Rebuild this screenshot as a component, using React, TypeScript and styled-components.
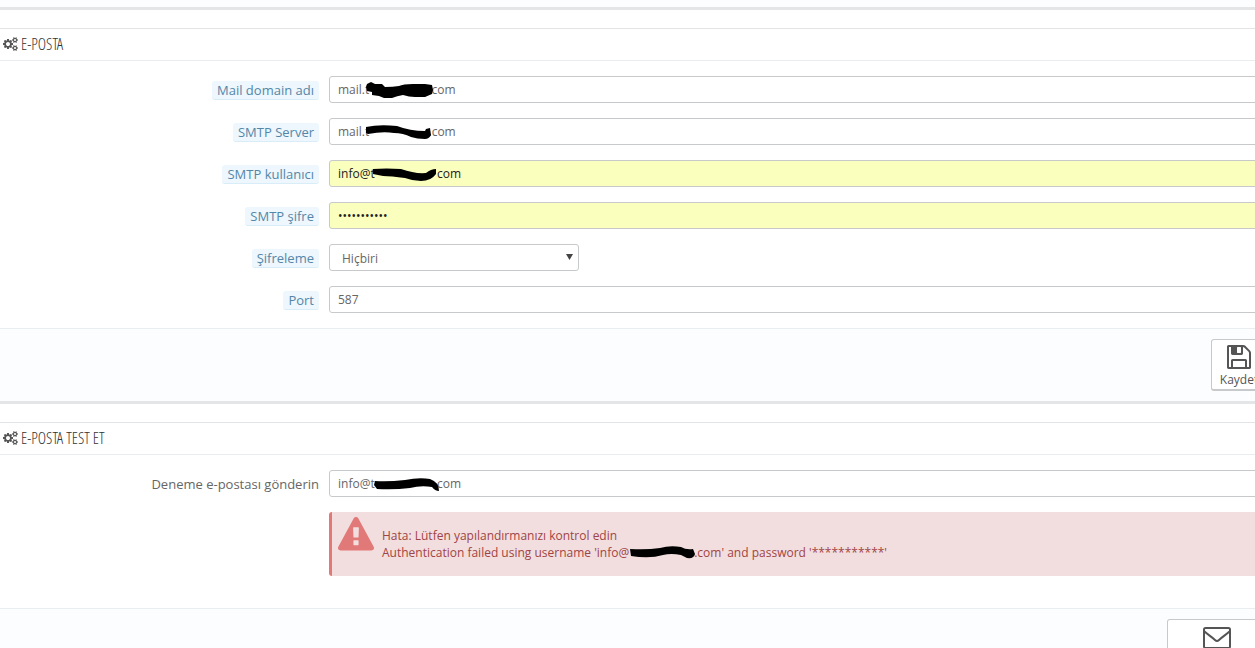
import React from 'react';
import styled, { createGlobalStyle } from 'styled-components';

const GlobalStyle = createGlobalStyle`
  *, *::before, *::after { box-sizing: border-box; }
  body {
    margin: 0;
    background: #fff;
    color: #666;
    font: 12px/17px "Open Sans", "Noto Sans", sans-serif;
  }
`;

const Viewport = styled.div`
  height: 100vh;
  overflow: hidden;
`;

/* The panels run a little past the right edge of the window. */
const Page = styled.main`
  width: calc(100% + 22px);
`;

const Panel = styled.section`
  margin-bottom: 18px;
  border-top: 1px solid #e3e4e6;
  border-bottom: 3px solid #e4e5e7;
  background: #fff;
`;

const PanelTail = styled.div`
  height: 10px;
  margin-bottom: 18px;
  border-bottom: 3px solid #e4e5e7;
  background: #fcfdfe;
`;

const PanelHeading = styled.h3`
  display: flex;
  align-items: center;
  gap: 3px;
  height: 32px;
  margin: 0;
  padding: 0 0 2px 3px;
  border-bottom: 1px solid #eaedef;
  color: #333;
  font: 400 16px/20px "Open Sans Condensed Light", "Roboto Condensed", "Liberation Sans Narrow", sans-serif;
  text-transform: uppercase;

  svg {
    color: #555;
  }
`;

const PanelBody = styled.div<{ $roomy?: boolean }>`
  display: flex;
  flex-direction: column;
  gap: 15px;
  padding: 15px 0 ${(p) => (p.$roomy ? 32 : 15)}px;
`;

const PanelFooter = styled.footer`
  display: flex;
  justify-content: flex-end;
  padding: 10px;
  border-top: 1px solid #eaedef;
  background: #fcfdfe;
`;

const Row = styled.div`
  display: grid;
  grid-template-columns: 319px minmax(0, 1fr);
  column-gap: 10px;
  align-items: center;
  padding-right: 10px;
`;

const Label = styled.label<{ $plain?: boolean }>`
  justify-self: end;
  margin-top: 2px;
  padding: ${(p) => (p.$plain ? '0' : '0 5px')};
  border-bottom: 1px solid ${(p) => (p.$plain ? 'transparent' : '#d8edf7')};
  border-radius: 3px;
  background: ${(p) => (p.$plain ? 'none' : '#edf7fd')};
  color: ${(p) => (p.$plain ? '#666' : '#5486a8')};
  font-size: 13px;
  line-height: 18px;
`;

const Control = styled.div<{ $narrow?: boolean }>`
  position: relative;
  width: ${(p) => (p.$narrow ? '250px' : 'auto')};
`;

const Input = styled.input<{ $filled?: boolean }>`
  display: block;
  width: 100%;
  height: 27px;
  padding: 0 8px;
  border: 1px solid #c7c9cb;
  border-radius: 3px;
  outline: 0;
  background: ${(p) => (p.$filled ? '#faffbd' : '#fff')};
  color: ${(p) => (p.$filled ? '#222' : '#666')};
  font: inherit;
`;

const Select = styled.select`
  display: block;
  width: 100%;
  height: 27px;
  padding: 1px 12px 0;
  border: 1px solid #c7c9cb;
  border-radius: 3px;
  appearance: none;
  background: #fff;
  color: #666;
  font: inherit;
`;

const Caret = styled.svg`
  position: absolute;
  top: 10px;
  right: 6px;
  pointer-events: none;
`;

const Stroke = styled.svg<{ $left: number; $top: number }>`
  position: absolute;
  top: ${(p) => p.$top}px;
  left: ${(p) => p.$left}px;
  pointer-events: none;
`;

const Alert = styled.div`
  display: flex;
  grid-column: 2;
  gap: 8px;
  height: 64px;
  padding: 5px 6px;
  border-left: 3px solid #e27979;
  border-radius: 3px;
  background: #f2dedf;
  color: #a04444;
`;

const AlertText = styled.p`
  margin: 10px 0 0;
  white-space: pre;
`;

const Hidden = styled.span`
  display: inline-block;
  position: relative;
  width: 65px;
`;

const Button = styled.button<{ $wide?: boolean }>`
  display: flex;
  flex-direction: column;
  align-items: center;
  gap: 2px;
  width: ${(p) => (p.$wide ? 100 : 56)}px;
  height: 52px;
  padding: 5px 0 0;
  border: 1px solid #c7c9cb;
  border-bottom-width: 2px;
  border-radius: 3px;
  background: #fff;
  color: #555;
  font: inherit;

  svg {
    flex-shrink: 0;
  }
`;

const smallCog =
  'q0 16-149 31-12 27-30 52 51 113 51 138 0 4-4 7-122 71-124 71-8 0-46-47t-52-68q-20 2-30 2t-30-2q-14 21-52 68t-46 47q-2 0-124-71-4-3-4-7 0-25 51-138-18-25-30-52-149-15-149-31v-140q0-16 149-31 13-29 30-52-51-113-51-138 0-4 4-7 4-2 35-20t59-34 30-16q8 0 46 46.5t52 67.5q20-2 30-2t30 2q51-71 92-112l6-2q4 0 124 70 4 3 4 7 0 25-51 138 17 23 30 52 149 15 149 31z';

const CogsIcon = () => (
  <svg width="15" height="14" viewBox="0 128 1920 1792" fill="currentColor" aria-hidden="true">
    <path
      d={
        'M896 1024q0-106-75-181t-181-75-181 75-75 181 75 181 181 75 181-75 75-181zm768 512q0-52-38-90t-90-38-90 38-38 90q0 53 37.5 90.5t90.5 37.5 90.5-37.5 37.5-90.5zm0-1024q0-52-38-90t-90-38-90 38-38 90q0 53 37.5 90.5t90.5 37.5 90.5-37.5 37.5-90.5zm-384 421v185q0 10-7 19.5t-16 10.5l-155 24q-11 35-32 76 34 48 90 115 7 11 7 20 0 12-7 19-23 30-82.5 89.5t-78.5 59.5q-11 0-21-7l-115-90q-37 19-77 31-11 108-23 155-7 24-30 24h-186q-11 0-20-7.5t-10-17.5l-23-153q-34-10-75-31l-118 89q-7 7-20 7-11 0-21-8-144-133-144-160 0-9 7-19 10-14 41-53t47-61q-23-44-35-82l-152-24q-10-1-17-9.5t-7-19.5v-185q0-10 7-19.5t16-10.5l155-24q11-35 32-76-34-48-90-115-7-11-7-20 0-12 7-20 22-30 82-89t79-59q11 0 21 7l115 90q34-18 77-32 11-108 23-154 7-24 30-24h186q11 0 20 7.5t10 17.5l23 153q34 10 75 31l118-89q8-7 20-7 11 0 21 8 144 133 144 160 0 8-7 19-12 16-42 54t-45 60q23 48 34 82l152 23q10 2 17 10.5t7 19.5zm640 533v140' +
        smallCog +
        'm0-1024v140' +
        smallCog
      }
    />
  </svg>
);

const SaveIcon = () => (
  <svg width="24" height="24" viewBox="0 128 1536 1536" fill="currentColor" aria-hidden="true">
    <path d="M384 1536h768v-384h-768v384zm896 0h128v-896q0-14-10-38.5t-20-34.5l-281-281q-10-10-34-20t-39-10v416q0 40-28 68t-68 28h-576q-40 0-68-28t-28-68v-416h-128v1280h128v-416q0-40 28-68t68-28h832q40 0 68 28t28 68v416zm-384-928v-320q0-13-9.5-22.5t-22.5-9.5h-192q-13 0-22.5 9.5t-9.5 22.5v320q0 13 9.5 22.5t22.5 9.5h192q13 0 22.5-9.5t9.5-22.5zm640 32v928q0 40-28 68t-68 28h-1344q-40 0-68-28t-28-68v-1344q0-40 28-68t68-28h928q40 0 88 20t76 48l280 280q28 28 48 76t20 88z" />
  </svg>
);

const WarningIcon = () => (
  <svg width="36" height="36" viewBox="0 0 1792 1792" fill="#e27979" aria-hidden="true">
    <path d="M1024 1375v-190q0-14-9.5-23.5t-22.5-9.5h-192q-13 0-22.5 9.5t-9.5 23.5v190q0 14 9.5 23.5t22.5 9.5h192q13 0 22.5-9.5t9.5-23.5zm-2-374l18-459q0-12-10-19-13-11-24-11h-220q-11 0-24 11-10 7-10 21l17 457q0 10 10 16.5t24 6.5h185q14 0 23.5-6.5t10.5-16.5zm-14-934l768 1408q35 63-2 126-17 29-46.5 46t-63.5 17h-1536q-34 0-63.5-17t-46.5-46q-37-63-2-126l768-1408q17-31 47-49t65-18 65 18 47 49z" />
  </svg>
);

const EnvelopeIcon = () => (
  <svg width="28" height="24" viewBox="0 0 28 24" fill="none" stroke="currentColor" strokeWidth="2" aria-hidden="true">
    <rect x="1" y="3" width="26" height="20" rx="1.5" />
    <path d="M1.5 6.5C4 9 9 12 12 15Q14 17 16 15C19 12 24 9 26.5 6.5" />
  </svg>
);

type StrokeShape = { d: string; left: number; top: number };

const Scribble = ({ d, left, top }: StrokeShape) => (
  <Stroke $left={left} $top={top} width="72" height="20" viewBox="0 0 72 20" aria-hidden="true">
    <path d={d} fill="#000" />
  </Stroke>
);

type Field = {
  id: string;
  label: string;
  value: string;
  type?: string;
  filled?: boolean;
  plain?: boolean;
  stroke?: StrokeShape;
};

const gap = (n: number) => '\u00a0'.repeat(n);

const accountFields: Field[] = [
  {
    id: 'domain',
    label: 'Mail domain adı',
    value: `mail.t${gap(20)}com`,
    stroke: {
      left: 36,
      top: 5,
      d: 'M1 6L2 3L6 1L10 3L17 3L20 6Q28 6 34 5Q38 3 48 3H60L67 4L68 9L67 13L60 16H50Q44 16 38 14Q32 15 27 17H19L14 15L7 14V11L2 10Z',
    },
  },
  {
    id: 'server',
    label: 'SMTP Server',
    value: `mail.t${gap(19)}.com`,
    stroke: {
      left: 36,
      top: 5,
      d: 'M1 4Q14 1 32 3Q45 8 60 8L61 6L65 5L66 12Q64 16 60 16Q52 16 46 14Q38 10 29 10Q18 8 3 11L1 10Z',
    },
  },
  {
    id: 'user',
    label: 'SMTP kullanıcı',
    value: `info@t${gap(20)}com`,
    filled: true,
    stroke: {
      left: 42,
      top: 4,
      d: 'M2 5Q15 4 30 5Q44 10 55 9Q60 5 65 5V10Q60 17 50 17Q42 17 34 14Q20 12 12 12L2 10Z',
    },
  },
  { id: 'password', label: 'SMTP şifre', value: '00000000000', type: 'password', filled: true },
];

const testField: Field = {
  id: 'test',
  label: 'Deneme e-postası gönderin',
  value: `info@t${gap(20)}com`,
  plain: true,
  stroke: {
    left: 45,
    top: 4,
    d: 'M1 7Q14 8 31 6Q45 3 56 5Q65 8 65 17Q61 17 58 13Q47 11 36 14Q20 16 3 15L0 11Z',
  },
};

const TextRow = ({ field }: { field: Field }) => (
  <Row>
    <Label htmlFor={field.id} $plain={field.plain}>
      {field.label}
    </Label>
    <Control>
      <Input id={field.id} type={field.type ?? 'text'} defaultValue={field.value} $filled={field.filled} />
      {field.stroke && <Scribble {...field.stroke} />}
    </Control>
  </Row>
);

export default function App() {
  return (
    <Viewport>
      <GlobalStyle />
      <Page>
        <PanelTail />
        <Panel>
          <PanelHeading>
            <CogsIcon />
            E-posta
          </PanelHeading>
          <PanelBody>
            {accountFields.map((field) => (
              <TextRow key={field.id} field={field} />
            ))}
            <Row>
              <Label htmlFor="encryption">Şifreleme</Label>
              <Control $narrow>
                <Select id="encryption" defaultValue="none">
                  <option value="none">Hiçbiri</option>
                  <option value="tls">TLS</option>
                  <option value="ssl">SSL</option>
                </Select>
                <Caret width="7" height="6" viewBox="0 0 7 6" aria-hidden="true">
                  <path d="M0 0H7L3.5 6Z" fill="#444" />
                </Caret>
              </Control>
            </Row>
            <TextRow field={{ id: 'port', label: 'Port', value: '587' }} />
          </PanelBody>
          <PanelFooter>
            <Button type="submit">
              <SaveIcon />
              Kaydet
            </Button>
          </PanelFooter>
        </Panel>
        <Panel>
          <PanelHeading>
            <CogsIcon />
            E-posta test et
          </PanelHeading>
          <PanelBody $roomy>
            <TextRow field={testField} />
            <Row>
              <Alert role="alert">
                <WarningIcon />
                <AlertText>
                  Hata: Lütfen yapılandırmanızı kontrol edin
                  <br />
                  {"Authentication failed using username 'info@"}
                  <Hidden>
                    <Scribble
                      left={0}
                      top={-15}
                      d="M1 7Q18 8 31 6Q41 3 52 5Q57 8 64 7L66 12Q65 17 58 16L52 13Q42 11 34 13Q21 17 2 14Z"
                    />
                  </Hidden>
                  {".com' and password '***********'"}
                </AlertText>
              </Alert>
            </Row>
          </PanelBody>
          <PanelFooter>
            <Button type="button" $wide aria-label="E-posta test et">
              <EnvelopeIcon />
            </Button>
          </PanelFooter>
        </Panel>
      </Page>
    </Viewport>
  );
}
